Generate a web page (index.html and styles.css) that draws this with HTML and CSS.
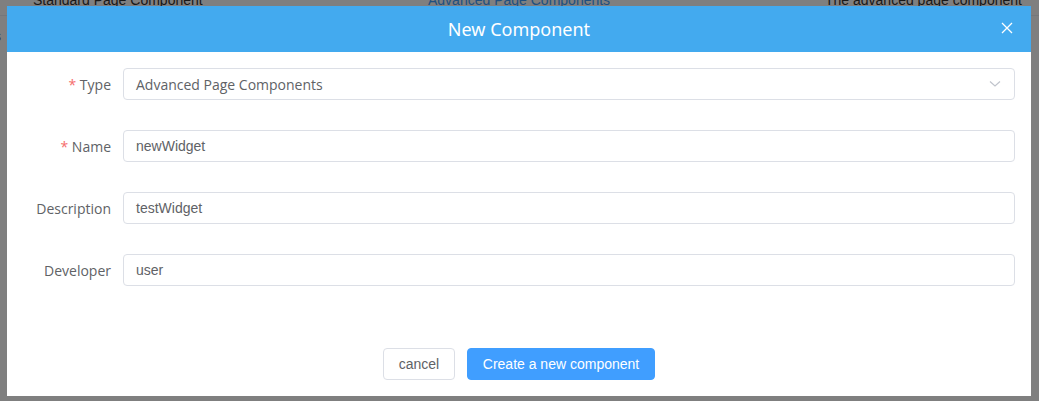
FILE: index.html
```html
<!DOCTYPE html>
<html>
<head>
<meta charset="utf-8">
<link rel="stylesheet" href="styles.css">
</head>
<body>
<div class="page">
  <div class="table-row">
    <span class="cell c1">Standard Page Component</span>
    <span class="cell c2 link">Advanced Page Components</span>
    <span class="cell c3">The advanced page component</span>
  </div>
  <div class="table-row2"><span class="cell-s">s</span></div>
</div>
<div class="overlay">
  <div class="dialog">
    <div class="dialog-header">
      <span class="dialog-title">New Component</span>
      <span class="close">
        <svg width="12" height="12" viewBox="0 0 12 12"><path d="M1 1L11 11M11 1L1 11" stroke="#fff" stroke-width="1.3" fill="none"/></svg>
      </span>
    </div>
    <form class="dialog-body">
      <div class="form-item">
        <label class="form-label"><span class="req">*</span> Type</label>
        <div class="input select">
          <span class="value">Advanced Page Components</span>
          <svg class="arrow" width="12" height="8" viewBox="0 0 12 8"><path d="M1 1.5L6 6L11 1.5" stroke="#c0c4cc" stroke-width="1.2" fill="none"/></svg>
        </div>
      </div>
      <div class="form-item">
        <label class="form-label"><span class="req">*</span> Name</label>
        <div class="input"><span class="value">newWidget</span></div>
      </div>
      <div class="form-item">
        <label class="form-label">Description</label>
        <div class="input"><span class="value">testWidget</span></div>
      </div>
      <div class="form-item">
        <label class="form-label">Developer</label>
        <div class="input"><span class="value">user</span></div>
      </div>
    </form>
    <div class="dialog-footer">
      <button class="btn btn-default" type="button">cancel</button>
      <button class="btn btn-primary" type="button">Create a new component</button>
    </div>
  </div>
</div>
</body>
</html>
```
FILE: styles.css
```css
html, body {
  margin: 0;
  padding: 0;
  width: 1039px;
  height: 401px;
  overflow: hidden;
  font-family: "Liberation Sans", Arial, sans-serif;
}
.page {
  background: #fff;
  height: 401px;
  color: #333;
  font-size: 14px;
}
.table-row {
  display: flex;
  height: 30px;
  margin-top: -15px;
  align-items: center;
  border-bottom: 1px solid #ebeef5;
}
.cell { display: block; white-space: nowrap; }
.c1 { width: 395px; padding-left: 33px; box-sizing: border-box; }
.c2 { width: 397px; padding-left: 33px; box-sizing: border-box; }
.c3 { padding-left: 33px; }
.link { color: #409eff; }
.table-row2 {
  height: 40px;
  display: flex;
  align-items: center;
  color: #606266;
  margin-left: -6px;
}
.overlay {
  position: fixed;
  inset: 0;
  background: rgba(0, 0, 0, 0.5);
}
.dialog {
  position: absolute;
  left: 7px;
  top: 6px;
  width: 1024px;
  height: 390px;
  background: #fff;
  display: flex;
  flex-direction: column;
}
.dialog-header {
  height: 46px;
  background: #43aaef;
  display: flex;
  align-items: center;
  justify-content: center;
  position: relative;
}
.dialog-title {
  color: #fff;
  font-family: "Noto Sans", "Open Sans", sans-serif;
  font-size: 18px;
}
.close {
  position: absolute;
  right: 18px;
  top: 16px;
  width: 12px;
  height: 12px;
  display: flex;
}
.dialog-body {
  margin: 0;
  padding: 16px 16px 0 20px;
  display: flex;
  flex-direction: column;
  gap: 30px;
}
.form-item {
  display: flex;
  align-items: center;
  height: 32px;
}
.form-label {
  width: 96px;
  padding-right: 12px;
  box-sizing: border-box;
  text-align: right;
  color: #606266;
  font-family: "Open Sans", "Noto Sans", sans-serif;
  font-size: 14px;
}
.req {
  color: #f56c6c;
}
.input {
  flex: 1;
  height: 32px;
  box-sizing: border-box;
  border: 1px solid #dcdfe6;
  border-radius: 4px;
  display: flex;
  align-items: center;
  padding: 0 15px 0 12px;
  color: #606266;
  font-size: 14px;
}
.select .value {
  flex: 1;
  font-family: "Open Sans", "Noto Sans", sans-serif;
}
.arrow { margin-right: -2px; }
.dialog-footer {
  margin-top: auto;
  padding-bottom: 16px;
  display: flex;
  justify-content: center;
  gap: 12px;
}
.btn {
  height: 32px;
  border-radius: 4px;
  font-family: "Liberation Sans", Arial, sans-serif;
  font-size: 14px;
  padding: 0;
  box-sizing: border-box;
  white-space: nowrap;
  cursor: pointer;
}
.btn-default {
  width: 72px;
  background: #fff;
  border: 1px solid #dcdfe6;
  color: #606266;
}
.btn-primary {
  width: 188px;
  background: #409eff;
  border: 1px solid #409eff;
  color: #fff;
}
```
